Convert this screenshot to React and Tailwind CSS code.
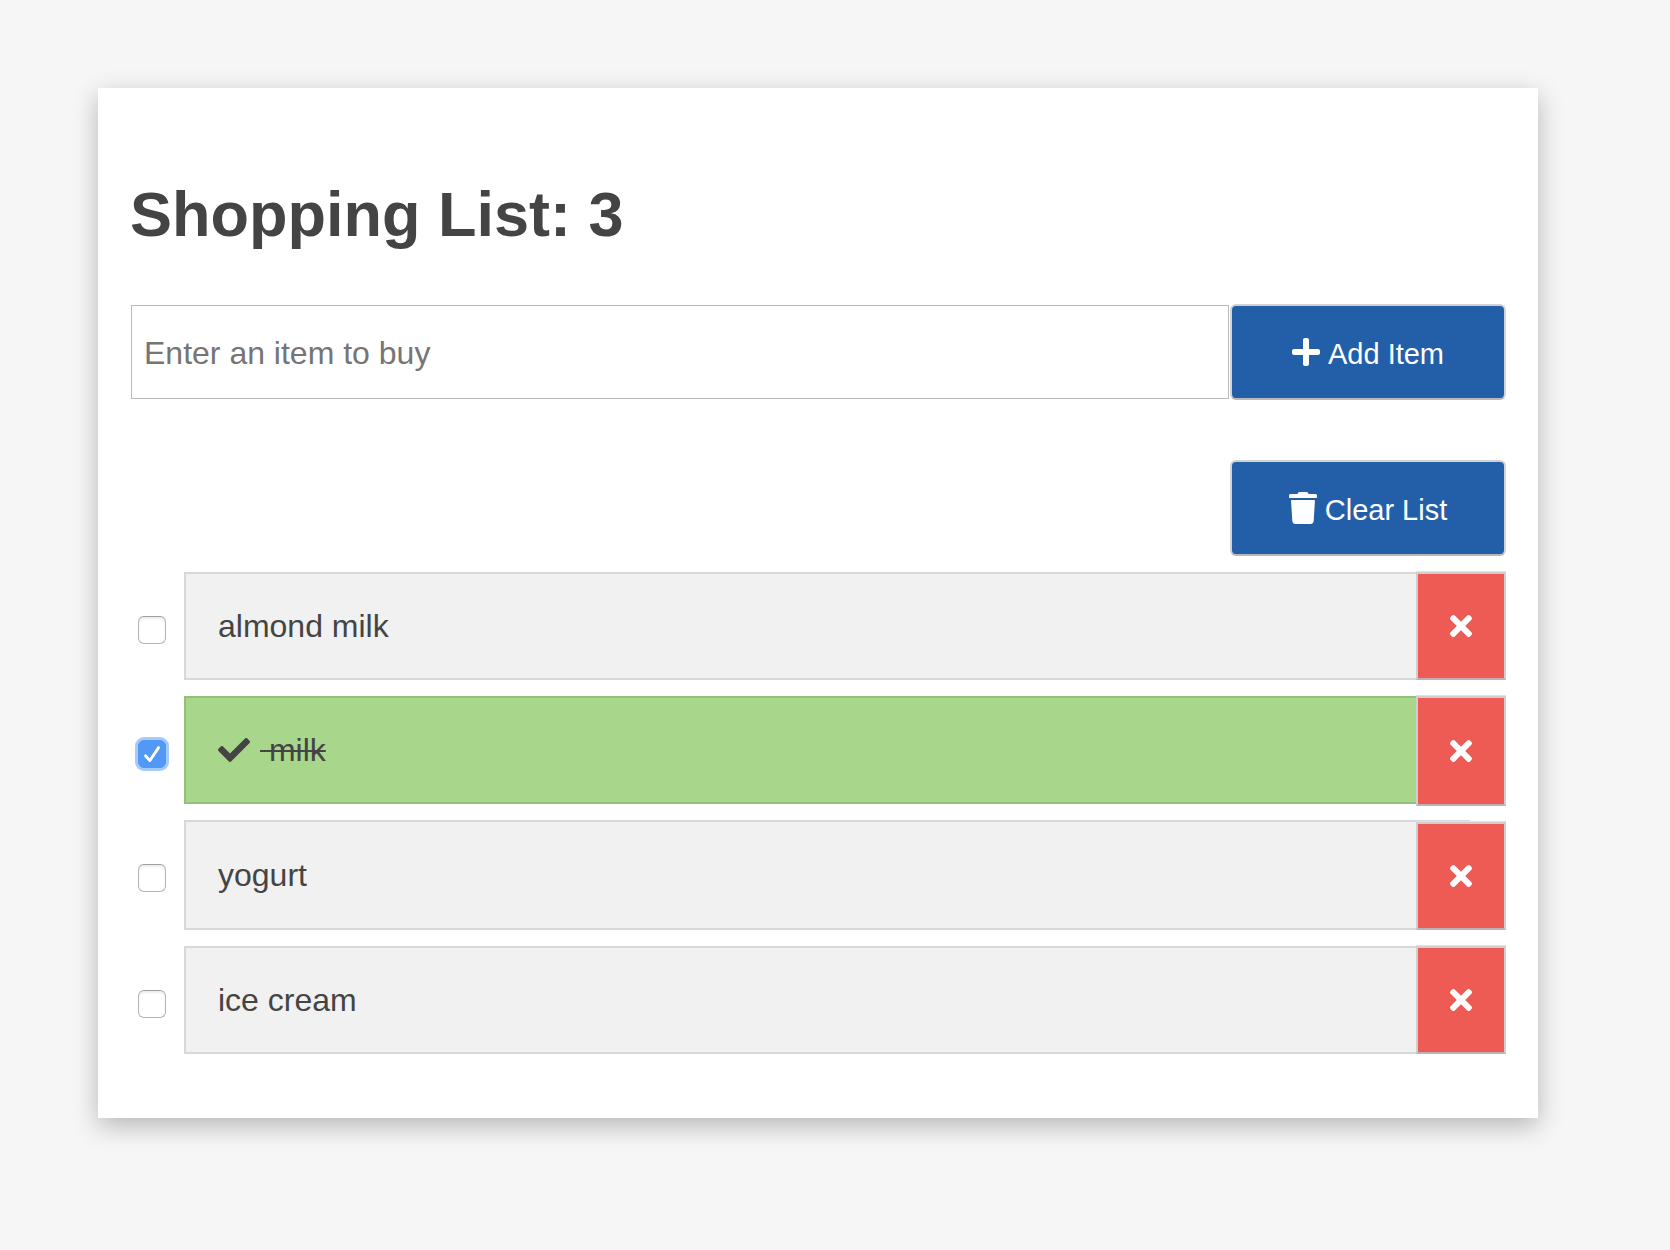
import { useState } from "react";
import { FaPlus, FaTimes, FaCheck } from "react-icons/fa";

const initialItems = [
  { id: 1, name: "almond milk", bought: false, box: "h-[108px]", remove: "" },
  { id: 2, name: "milk", bought: true, box: "h-[108px]", remove: "-mb-0.5" },
  { id: 3, name: "yogurt", bought: false, box: "h-[110px] -mr-[54px]", remove: "mt-0.5" },
  { id: 4, name: "ice cream", bought: false, box: "h-[108px]", remove: "" },
];

function TrashIcon() {
  return (
    <svg viewBox="0 0 448 512" className="h-8 w-7 shrink-0" fill="currentColor" aria-hidden="true">
      <path d="M0 84V56c0-13.3 10.7-24 24-24h112l9.4-18.7c4-8.2 12.3-13.3 21.4-13.3h114.3c9.1 0 17.4 5.1 21.5 13.3L312 32h112c13.3 0 24 10.7 24 24v28c0 6.6-5.4 12-12 12H12C5.4 96 0 90.6 0 84zm415.2 56.2L394.6 467c-1.6 25.3-22.6 45-47.9 45H101.3c-25.3 0-46.3-19.7-47.9-45L32.8 140.2c-.4-6.9 5.1-12.2 12-12.2h358.5c6.8 0 12.4 5.3 11.9 12.2z" />
    </svg>
  );
}

const blueButton =
  "flex h-24 w-[276px] shrink-0 items-center justify-center gap-2 rounded-md border-2 border-[#d3d3d3] border-b-[#b9b9b9] bg-[#235fa9] text-[29px] leading-9 text-white";

function Item({ item, onToggle, onRemove }) {
  const id = `item-${item.id}`;
  return (
    <li className="flex items-start">
      <span className="relative mx-2 mt-11 flex size-7 shrink-0">
        <input
          id={id}
          type="checkbox"
          checked={item.bought}
          onChange={onToggle}
          className="size-7 appearance-none rounded-md border border-[#b4b4b4] border-t-[#a0a0a0] bg-white shadow-[inset_0_2px_2px_#ececec] checked:border-[#5299f7] checked:bg-[#5299f7] checked:shadow-[0_0_0_3px_#a6cafb]"
        />
        {item.bought && (
          <svg viewBox="0 0 28 28" className="pointer-events-none absolute inset-0 size-7" fill="none" stroke="white" strokeWidth="2.8" strokeLinecap="round" strokeLinejoin="round" aria-hidden="true">
            <path d="M7.5 15.8L11.8 20.6L20.6 7.6" />
          </svg>
        )}
      </span>
      <label
        htmlFor={id}
        className={`ml-2.5 flex min-w-0 grow items-center border-2 border-r-0 px-8 text-[32px] leading-10 text-[#444444] ${item.box} ${
          item.bought ? "border-[#93bf7c] bg-[#a8d68b]" : "border-[#d8d8d8] bg-[#f1f1f1]"
        }`}
      >
        {item.bought && <FaCheck className="mr-2.5 size-8" />}
        <span className={item.bought ? "whitespace-pre line-through decoration-2" : ""}>
          {item.bought ? " " + item.name : item.name}
        </span>
      </label>
      <button
        type="button"
        aria-label={`Remove ${item.name}`}
        onClick={onRemove}
        className={`relative flex w-[90px] shrink-0 items-center justify-center self-stretch border-2 border-[#d0cece] border-b-[#bdb1b1] bg-[#ee5b55] text-white shadow-[0_-1px_#ecdcdc] ${item.remove}`}
      >
        <FaTimes className="h-8 w-[22px]" />
      </button>
    </li>
  );
}

export default function App() {
  const [items, setItems] = useState(initialItems);
  const remaining = items.filter((i) => !i.bought).length;
  const toggle = (id) => setItems(items.map((i) => (i.id === id ? { ...i, bought: !i.bought } : i)));

  return (
    <div className="min-h-screen bg-[#f6f6f6] pt-[88px] pr-[132px] pb-[132px] pl-[98px] font-['Liberation_Sans',Arial,sans-serif] text-[#444444]">
      <main className="bg-white px-8 pt-[90px] pb-16 shadow-[0_8px_24px_rgba(0,0,0,0.26)]">
        <h1 className="text-[63px] leading-[72px] font-bold">Shopping List: {remaining}</h1>
        <form className="mt-[54px] flex items-center" onSubmit={(e) => e.preventDefault()}>
          <input
            type="text"
            aria-label="Item to buy"
            placeholder="Enter an item to buy"
            className="mx-px h-[94px] min-w-0 grow border border-[#bbbbbb] bg-white px-3 pt-0.5 text-[32px] leading-10 placeholder:text-[#757575]"
          />
          <button type="submit" className={blueButton}>
            <FaPlus className="h-8 w-7" />
            <span className="pt-1">Add Item</span>
          </button>
        </form>
        <div className="mt-[60px] flex justify-end">
          <button type="button" className={blueButton} onClick={() => setItems([])}>
            <TrashIcon />
            <span className="pt-1">Clear List</span>
          </button>
        </div>
        <ul className="mt-4 flex flex-col gap-4">
          {items.map((item) => (
            <Item
              key={item.id}
              item={item}
              onToggle={() => toggle(item.id)}
              onRemove={() => setItems(items.filter((i) => i.id !== item.id))}
            />
          ))}
        </ul>
      </main>
    </div>
  );
}
